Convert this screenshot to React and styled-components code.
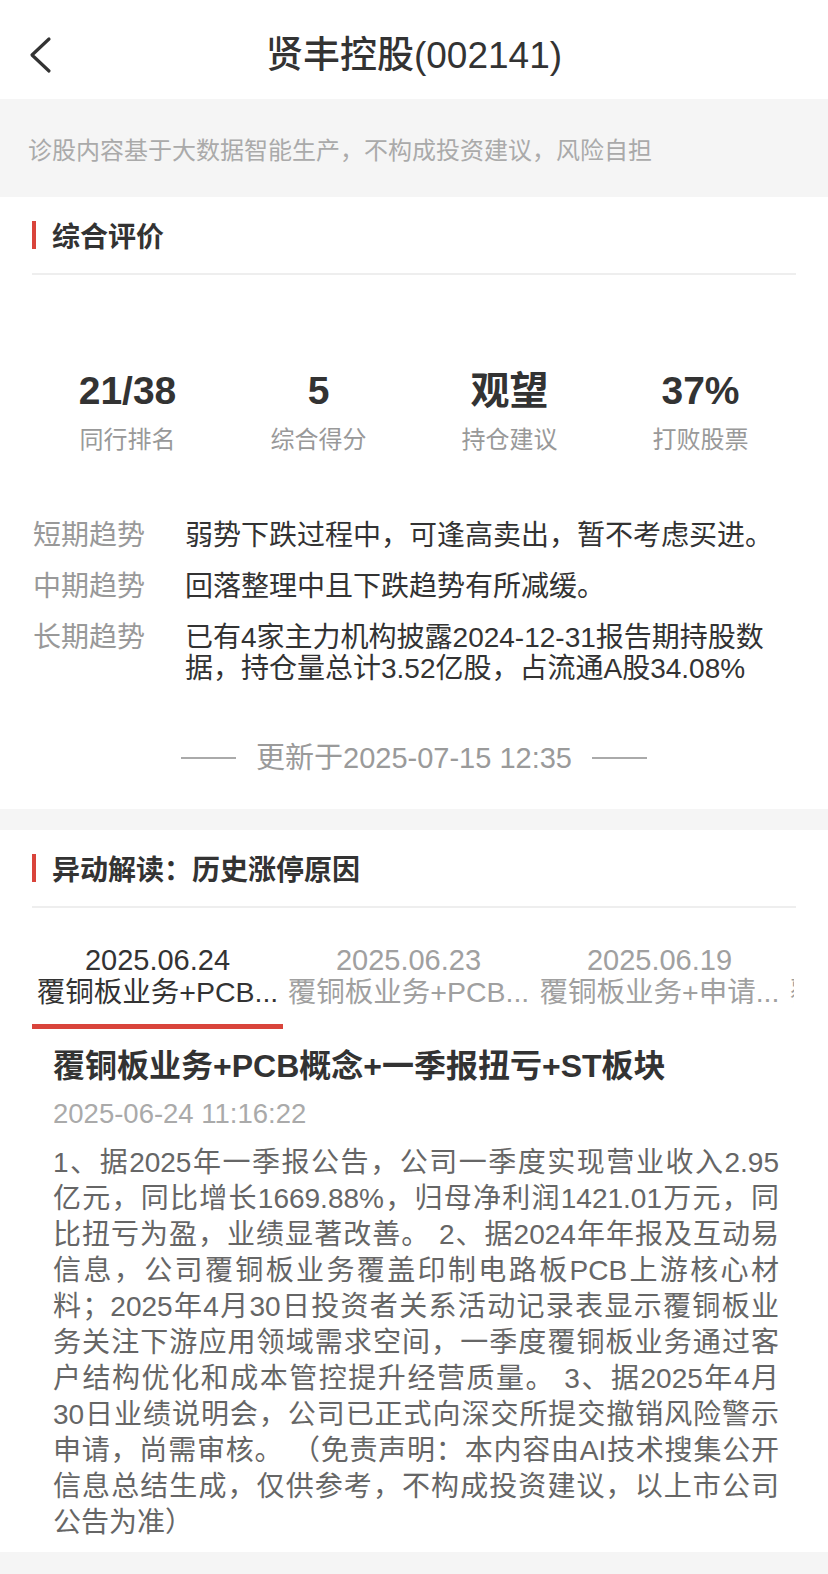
import styled, { createGlobalStyle } from "styled-components";

const GlobalStyle = createGlobalStyle`
  html, body {
    margin: 0;
    padding: 0;
    background: #f5f5f5;
    font-family: "Liberation Sans", "Noto Sans CJK SC", sans-serif;
    color: #333;
  }
  #root {
    min-height: 100vh;
  }
`;

const stats = [
  { value: "21/38", label: "同行排名" },
  { value: "5", label: "综合得分" },
  { value: "观望", label: "持仓建议" },
  { value: "37%", label: "打败股票" },
];

const trends = [
  { label: "短期趋势", text: "弱势下跌过程中，可逢高卖出，暂不考虑买进。" },
  { label: "中期趋势", text: "回落整理中且下跌趋势有所减缓。" },
  {
    label: "长期趋势",
    text: "已有4家主力机构披露2024-12-31报告期持股数据，持仓量总计3.52亿股，占流通A股34.08%",
  },
];

const tabs = [
  { date: "2025.06.24", name: "覆铜板业务+PCB..." },
  { date: "2025.06.23", name: "覆铜板业务+PCB..." },
  { date: "2025.06.19", name: "覆铜板业务+申请..." },
  { date: "2025.06.18", name: "覆铜板业务+PCB..." },
];

// lines as laid out in the app (justified)
const bodyLines = [
  "1、据2025年一季报公告，公司一季度实现营业收入2.95",
  "亿元，同比增长1669.88%，归母净利润1421.01万元，同",
  "比扭亏为盈，业绩显著改善。 2、据2024年年报及互动易",
  "信息，公司覆铜板业务覆盖印制电路板PCB上游核心材",
  "料；2025年4月30日投资者关系活动记录表显示覆铜板业",
  "务关注下游应用领域需求空间，一季度覆铜板业务通过客",
  "户结构优化和成本管控提升经营质量。 3、据2025年4月",
  "30日业绩说明会，公司已正式向深交所提交撤销风险警示",
  "申请，尚需审核。 （免责声明：本内容由AI技术搜集公开",
  "信息总结生成，仅供参考，不构成投资建议，以上市公司",
  "公告为准）",
];

export default function App() {
  return (
    <Page>
      <GlobalStyle />
      <Header>
        <Back aria-label="back">
          <svg width="26" height="38" viewBox="0 0 26 38">
            <path
              d="M21 3 L4 19 L21 35"
              fill="none"
              stroke="#333"
              strokeWidth="3.2"
              strokeLinecap="round"
              strokeLinejoin="round"
            />
          </svg>
        </Back>
        <Title>贤丰控股(002141)</Title>
        <span />
      </Header>

      <Notice>诊股内容基于大数据智能生产，不构成投资建议，风险自担</Notice>

      <Card>
        <SectionHead>综合评价</SectionHead>
        <Stats>
          {stats.map((s) => (
            <Stat key={s.label}>
              <StatValue>{s.value}</StatValue>
              <StatLabel>{s.label}</StatLabel>
            </Stat>
          ))}
        </Stats>
        <Trends>
          {trends.map((t) => (
            <TrendRow key={t.label}>
              <TrendLabel>{t.label}</TrendLabel>
              <TrendText>{t.text}</TrendText>
            </TrendRow>
          ))}
        </Trends>
        <Updated>
          <Rule />
          <span>更新于2025-07-15 12:35</span>
          <Rule />
        </Updated>
      </Card>

      <Card $last>
        <SectionHead>异动解读：历史涨停原因</SectionHead>
        <TabStrip>
          {tabs.map((t, i) => (
            <Tab key={t.date} $active={i === 0}>
              <TabDate>{t.date}</TabDate>
              <TabName>{t.name}</TabName>
            </Tab>
          ))}
        </TabStrip>
        <Article>
          <ArticleTitle>覆铜板业务+PCB概念+一季报扭亏+ST板块</ArticleTitle>
          <ArticleTime>2025-06-24 11:16:22</ArticleTime>
          <ArticleBody>
            {bodyLines.map((line, i) => (
              <BodyLine key={i} $last={i === bodyLines.length - 1}>
                {line}
              </BodyLine>
            ))}
          </ArticleBody>
        </Article>
      </Card>
    </Page>
  );
}

const Page = styled.div`
  width: 828px;
  min-height: 1574px;
  background: #f5f5f5;
`;

const Header = styled.div`
  height: 99px;
  background: #fff;
  display: grid;
  grid-template-columns: 1fr auto 1fr;
  align-items: center;
  padding: 0 0 0 28px;
`;

const Back = styled.div`
  display: flex;
  align-items: center;
  height: 38px;
  margin-top: 10px;
`;

const Title = styled.div`
  font-size: 37px;
  font-weight: 500;
  color: #333;
  line-height: 44px;
  margin-left: -28px;
  margin-top: 12px;
`;

const Notice = styled.div`
  height: 98px;
  display: flex;
  align-items: center;
  padding-left: 28px;
  font-size: 24px;
  color: #aaa;
`;

const Card = styled.div`
  background: #fff;
  padding-bottom: ${({ $last }) => ($last ? "11px" : "35px")};
  margin-bottom: 21px;
`;

const SectionHead = styled.div`
  height: 76px;
  margin: 0 32px;
  border-bottom: 2px solid #eeeeee;
  display: flex;
  align-items: center;
  font-size: 28px;
  font-weight: 700;
  color: #333;
  &::before {
    content: "";
    width: 4px;
    height: 28px;
    background: #d9443b;
    margin-right: 16px;
  }
`;

const Stats = styled.div`
  display: grid;
  grid-template-columns: repeat(4, 1fr);
  margin: 0 32px;
  padding-top: 92px;
`;

const Stat = styled.div`
  display: flex;
  flex-direction: column;
  align-items: center;
`;

const StatValue = styled.div`
  font-size: 39px;
  font-weight: 700;
  line-height: 48px;
  color: #333;
`;

const StatLabel = styled.div`
  font-size: 24px;
  line-height: 32px;
  margin-top: 9px;
  color: #999;
`;

const Trends = styled.div`
  display: flex;
  flex-direction: column;
  gap: 20px;
  margin: 64px 38px 0 33px;
`;

const TrendRow = styled.div`
  display: grid;
  grid-template-columns: 152px 1fr;
  font-size: 28px;
  line-height: 31px;
`;

const TrendLabel = styled.div`
  color: #999;
`;

const TrendText = styled.div`
  color: #333;
`;

const Updated = styled.div`
  display: flex;
  justify-content: center;
  align-items: center;
  gap: 20px;
  margin-top: 58px;
  font-size: 29px;
  line-height: 32px;
  color: #9a9a9a;
`;

const Rule = styled.i`
  width: 55px;
  height: 2px;
  background: #aaa;
`;

const TabStrip = styled.div`
  display: flex;
  margin: 0 32px;
  padding-top: 36px;
  overflow: hidden;
  width: 762px;
`;

const Tab = styled.div`
  flex: 0 0 251px;
  box-sizing: border-box;
  padding: 0 4px 16px;
  text-align: center;
  white-space: nowrap;
  overflow: hidden;
  color: ${({ $active }) => ($active ? "#333" : "#a0a0a0")};
  border-bottom: 5px solid ${({ $active }) => ($active ? "#d9443b" : "transparent")};
`;

const TabDate = styled.div`
  font-size: 29px;
  line-height: 32px;
`;

const TabName = styled.div`
  font-size: 28.5px;
  line-height: 32px;
`;

const Article = styled.div`
  padding: 17px 49px 0 53px;
`;

const ArticleTitle = styled.div`
  font-size: 32px;
  font-weight: 700;
  line-height: 40px;
  color: #333;
`;

const ArticleTime = styled.div`
  margin-top: 12px;
  font-size: 27.5px;
  line-height: 32px;
  color: #aaa;
`;

const ArticleBody = styled.div`
  margin-top: 15px;
  font-size: 28px;
  line-height: 36px;
  color: #666;
`;

const BodyLine = styled.div`
  white-space: nowrap;
  text-align: justify;
  text-align-last: ${({ $last }) => ($last ? "left" : "justify")};
`;
